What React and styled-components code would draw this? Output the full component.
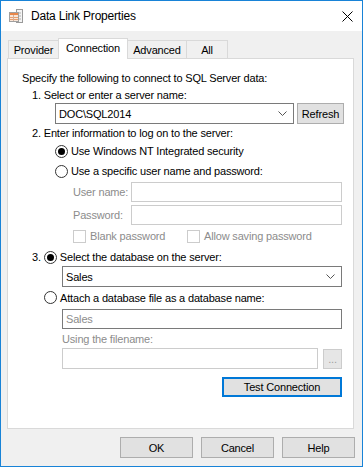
import styled, { createGlobalStyle } from "styled-components";

const GlobalStyle = createGlobalStyle`
  html, body {
    margin: 0;
    padding: 0;
    background: #ffffff;
  }
  body {
    font-family: "Liberation Sans", Arial, sans-serif;
    font-size: 11px;
    letter-spacing: -0.17px;
    color: #000;
  }
`;

const Window = styled.div`
  width: 363px;
  height: 467px;
  box-sizing: border-box;
  border: 1px solid #1883d7;
  background: #f0f0f0;
  display: flex;
  flex-direction: column;
`;

const TitleBar = styled.div`
  height: 30px;
  flex-shrink: 0;
  background: #ffffff;
  display: flex;
  align-items: center;
  padding-left: 7px;
`;

const Title = styled.span`
  margin-left: 7px;
  font-size: 12px;
  letter-spacing: -0.2px;
`;

const Close = styled.svg`
  margin-left: auto;
  margin-right: 9px;
`;

const Body = styled.div`
  flex: 1;
  padding: 0 8px 0 6px;
  display: flex;
  flex-direction: column;
`;

const TabStrip = styled.div`
  margin: 7px 0 0 1px;
  height: 20px;
  display: flex;
  align-items: flex-end;
`;

const Tab = styled.div`
  box-sizing: border-box;
  width: ${(p) => p.$w}px;
  height: ${(p) => (p.$active ? 21 : 18)}px;
  margin-bottom: ${(p) => (p.$active ? -1 : 0)}px;
  margin-left: -1px;
  position: relative;
  z-index: ${(p) => (p.$active ? 1 : 0)};
  border: 1px solid #d9d9d9;
  border-bottom: none;
  background: ${(p) => (p.$active ? "#ffffff" : "#f0f0f0")};
  display: flex;
  align-items: center;
  justify-content: center;
  padding-bottom: ${(p) => (p.$active ? 2 : 0)}px;
  &:first-child {
    margin-left: 0;
  }
`;

const Panel = styled.div`
  box-sizing: border-box;
  height: 371px;
  border: 1px solid #d9d9d9;
  background: #ffffff;
  padding: 11px 11px 0 14px;
  display: flex;
  flex-direction: column;
`;

const Row = styled.div`
  display: flex;
  align-items: center;
  flex-shrink: 0;
  height: ${(p) => p.$h}px;
  margin-top: ${(p) => p.$mt || 0}px;
  padding-left: ${(p) => p.$indent || 0}px;
  gap: ${(p) => p.$gap || 0}px;
  justify-content: ${(p) => (p.$end ? "flex-end" : "flex-start")};
  color: ${(p) => (p.$dim ? "#8c8c8c" : "#000")};
`;

const Combo = styled.div`
  box-sizing: border-box;
  width: ${(p) => p.$w}px;
  height: 21px;
  flex-shrink: 0;
  border: 1px solid #7a7a7a;
  background: #fff;
  display: flex;
  align-items: center;
  padding-left: 3px;
  padding-right: 6px;
  justify-content: space-between;
`;

const Field = styled.div`
  box-sizing: border-box;
  width: ${(p) => p.$w}px;
  height: ${(p) => p.$h || 20}px;
  flex-shrink: 0;
  border: 1px solid ${(p) => (p.$dark ? "#7a7a7a" : "#cccccc")};
  background: #fff;
  display: flex;
  align-items: center;
  padding-left: 3px;
  color: #8c8c8c;
`;

const Button = styled.div`
  box-sizing: border-box;
  width: ${(p) => p.$w}px;
  height: ${(p) => p.$h || 21}px;
  flex-shrink: 0;
  margin-left: ${(p) => p.$ml || 0}px;
  border: ${(p) => (p.$focus ? "2px solid #0078d7" : "1px solid #adadad")};
  background: #e1e1e1;
  display: flex;
  align-items: center;
  justify-content: center;
  color: ${(p) => (p.$disabled ? "#a0a0a0" : "#000")};
  ${(p) => p.$disabled && "border-color: #cccccc; background: #e6e6e6;"}
`;

const Label = styled.span`
  width: ${(p) => p.$w}px;
  flex-shrink: 0;
`;

const RadioCircle = styled.span`
  box-sizing: border-box;
  width: 13px;
  height: 13px;
  border-radius: 50%;
  border: 1px solid #333;
  background: #fff;
  display: flex;
  align-items: center;
  justify-content: center;
  flex-shrink: 0;
  &::after {
    content: "";
    width: 7px;
    height: 7px;
    border-radius: 50%;
    background: ${(p) => (p.$on ? "#000" : "transparent")};
  }
`;

const Check = styled.span`
  box-sizing: border-box;
  width: 13px;
  height: 13px;
  border: 1px solid #cccccc;
  background: #fff;
  flex-shrink: 0;
`;

const CheckGroup = styled.span`
  display: flex;
  align-items: center;
  gap: 4px;
  ${(p) => p.$w && `width: ${p.$w}px;`}
`;

const Footer = styled.div`
  display: flex;
  justify-content: flex-end;
  gap: 8px;
  margin-top: 8px;
  margin-right: -1px;
`;

const Chevron = () => (
  <svg width="9" height="5" viewBox="0 0 9 5">
    <polyline points="0.5,0.5 4.5,4.5 8.5,0.5" fill="none" stroke="#555" strokeWidth="1" />
  </svg>
);

const AppIcon = () => (
  <svg width="16" height="16" viewBox="0 0 16 16">
    <rect x="8.5" y="1.5" width="6" height="13" fill="#f4f4f4" stroke="#9a9a9a" />
    <line x1="10" y1="5" x2="13" y2="5" stroke="#b0b0b0" />
    <line x1="10" y1="8" x2="13" y2="8" stroke="#b0b0b0" />
    <line x1="10" y1="11" x2="13" y2="11" stroke="#b0b0b0" />
    <rect x="1.5" y="4.5" width="9" height="9" fill="#fbe6d6" stroke="#a0a0a0" />
    <rect x="2" y="5" width="8" height="2" fill="#e8874a" />
    <line x1="2" y1="9.5" x2="10" y2="9.5" stroke="#e8a070" />
    <line x1="2" y1="11.5" x2="10" y2="11.5" stroke="#e8a070" />
    <line x1="5.5" y1="7" x2="5.5" y2="13" stroke="#d0b0a0" />
  </svg>
);

const App = () => {
  return (
    <>
      <GlobalStyle />
      <Window>
        <TitleBar>
          <AppIcon />
          <Title>Data Link Properties</Title>
          <Close width="11" height="11" viewBox="0 0 11 11">
            <path d="M0.5 0.5 L10.5 10.5 M10.5 0.5 L0.5 10.5" stroke="#000" strokeWidth="1" />
          </Close>
        </TitleBar>
        <Body>
          <TabStrip>
            <Tab $w={51}>Provider</Tab>
            <Tab $w={70} $active>Connection</Tab>
            <Tab $w={60}>Advanced</Tab>
            <Tab $w={42}>All</Tab>
          </TabStrip>
          <Panel>
            <Row $h={16}>Specify the following to connect to SQL Server data:</Row>
            <Row $h={16} $mt={1} $indent={10}>1. Select or enter a server name:</Row>
            <Row $h={21} $indent={33}>
              <Combo $w={239}>
                <span>DOC\SQL2014</span>
                <Chevron />
              </Combo>
              <Button $w={47} $ml={3}>Refresh</Button>
            </Row>
            <Row $h={16} $mt={1} $indent={10}>2. Enter information to log on to the server:</Row>
            <Row $h={20} $indent={33} $gap={3}>
              <RadioCircle $on />
              <span>Use Windows NT Integrated security</span>
            </Row>
            <Row $h={20} $indent={33} $gap={3}>
              <RadioCircle />
              <span>Use a specific user name and password:</span>
            </Row>
            <Row $h={20} $mt={1} $indent={51} $dim>
              <Label $w={58}>User name:</Label>
              <Field $w={211} />
            </Row>
            <Row $h={20} $mt={3} $indent={51} $dim>
              <Label $w={58}>Password:</Label>
              <Field $w={211} />
            </Row>
            <Row $h={18} $mt={2} $indent={51} $dim>
              <CheckGroup $w={114}>
                <Check />
                <span>Blank password</span>
              </CheckGroup>
              <CheckGroup>
                <Check />
                <span>Allow saving password</span>
              </CheckGroup>
            </Row>
            <Row $h={16} $mt={4} $indent={10} $gap={3}>
              <span>3.</span>
              <RadioCircle $on />
              <span>Select the database on the server:</span>
            </Row>
            <Row $h={21} $mt={1} $indent={40}>
              <Combo $w={280}>
                <span>Sales</span>
                <Chevron />
              </Combo>
            </Row>
            <Row $h={19} $mt={1} $indent={22} $gap={3}>
              <RadioCircle />
              <span>Attach a database file as a database name:</span>
            </Row>
            <Row $h={20} $mt={2} $indent={40}>
              <Field $w={280} $dark>Sales</Field>
            </Row>
            <Row $h={16} $mt={2} $indent={40} $dim>Using the filename:</Row>
            <Row $h={21} $mt={1} $indent={40}>
              <Field $w={256} $h={21} />
              <Button $w={19} $h={20} $ml={5} $disabled>...</Button>
            </Row>
            <Row $h={20} $mt={8} $end>
              <Button $w={120} $h={20} $focus>Test Connection</Button>
            </Row>
          </Panel>
          <Footer>
            <Button $w={73}>OK</Button>
            <Button $w={73}>Cancel</Button>
            <Button $w={73}>Help</Button>
          </Footer>
        </Body>
      </Window>
    </>
  );
};

export default App;
